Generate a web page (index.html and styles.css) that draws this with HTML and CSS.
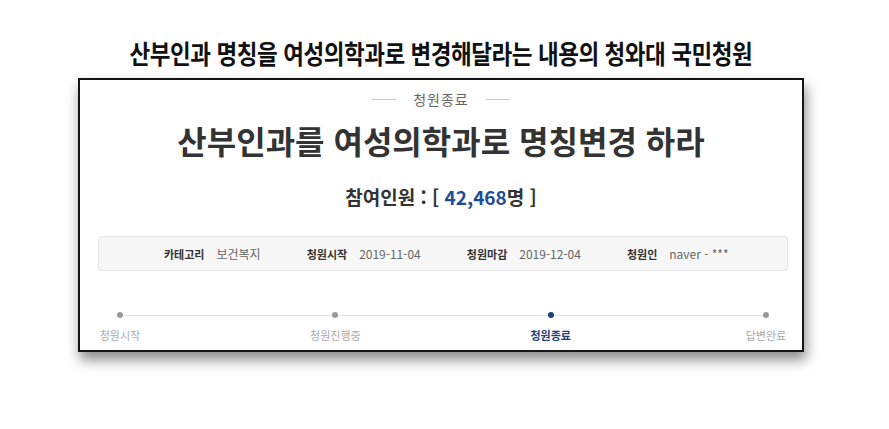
FILE: index.html
```html
<!DOCTYPE html>
<html lang="ko">
<head>
    <meta charset="UTF-8">
    <meta name="viewport" content="width=device-width, initial-scale=1.0">
    <title>청와대 국민청원</title>
    <link rel="stylesheet" href="styles.css">
</head>
<body>
    <div class="page">
        <h1 class="headline"><span>산부인과 명칭을 여성의학과로 변경해달라는 내용의 청와대 국민청원</span></h1>

        <div class="petition">
            <div class="status">
                <span class="status-line"></span>
                <span class="status-text">청원종료</span>
                <span class="status-line"></span>
            </div>
            <h2 class="petition-title">산부인과를 여성의학과로 명칭변경 하라</h2>
            <div class="count">참여인원 : [ <span class="count-num">42,468</span>명 ]</div>

            <div class="info">
                <div class="info-item"><span class="info-label">카테고리</span><span class="info-value">보건복지</span></div>
                <div class="info-item"><span class="info-label">청원시작</span><span class="info-value">2019-11-04</span></div>
                <div class="info-item"><span class="info-label">청원마감</span><span class="info-value">2019-12-04</span></div>
                <div class="info-item"><span class="info-label">청원인</span><span class="info-value">naver - ***</span></div>
            </div>

            <div class="progress">
                <div class="step"><span class="dot"></span><span class="step-label">청원시작</span></div>
                <div class="step"><span class="dot"></span><span class="step-label">청원진행중</span></div>
                <div class="step active"><span class="dot"></span><span class="step-label">청원종료</span></div>
                <div class="step"><span class="dot"></span><span class="step-label">답변완료</span></div>
            </div>
        </div>
    </div>
</body>
</html>
```

FILE: styles.css
```css
body {
    margin: 0;
    background-color: #fff;
    font-family: "Noto Sans CJK KR", "Noto Sans", sans-serif;
    color: #333;
}

.page {
    width: 889px;
    height: 429px;
    padding-top: 36px;
    box-sizing: border-box;
}

.headline {
    margin: 0;
    height: 34px;
    line-height: 34px;
    text-align: center;
    padding-right: 8px;
    font-size: 26px;
    font-weight: 700;
    color: #111;
}

.headline span {
    display: inline-block;
    transform: scaleX(0.865);
    white-space: nowrap;
    letter-spacing: -0.5px;
}

.petition {
    width: 726px;
    margin: 8px 0 0 78px;
    border: 2px solid #151515;
    background-color: #fff;
    box-sizing: border-box;
    padding-bottom: 7px;
    box-shadow: 2px 8px 12px rgba(0, 0, 0, 0.45);
}

.status {
    margin-top: 10px;
    height: 18px;
    display: flex;
    justify-content: center;
    align-items: center;
    gap: 17px;
}

.status-line {
    width: 24px;
    height: 1px;
    background-color: #c8c8c8;
}

.status-text {
    font-size: 14px;
    line-height: 18px;
    letter-spacing: 1px;
    color: #666;
}

.petition-title {
    margin: 14px 0 0;
    line-height: 36px;
    text-align: center;
    font-size: 32px;
    font-weight: 700;
    color: #333;
}

.count {
    margin-top: 27px;
    line-height: 24px;
    text-align: center;
    font-size: 19px;
    font-weight: 700;
    color: #333;
}

.count-num {
    color: #1f4b94;
}

.info {
    margin: 27px 14px 0 18px;
    height: 35px;
    box-sizing: border-box;
    border: 1px solid #e6e6e6;
    border-radius: 3px;
    background-color: #f7f7f7;
    display: flex;
    align-items: center;
    padding-left: 65px;
    gap: 46px;
    font-size: 11px;
}

.info-item {
    display: flex;
    align-items: baseline;
    gap: 12px;
    white-space: nowrap;
}

.info-label {
    font-weight: 700;
    color: #333;
}

.info-value {
    font-size: 12px;
    color: #666;
}

.progress {
    position: relative;
    margin: 41px 13px 0 17px;
    display: flex;
    justify-content: space-between;
}

.progress::before {
    content: "";
    position: absolute;
    left: 23px;
    right: 23px;
    top: 3px;
    height: 1px;
    background-color: #e2e2e2;
}

.step {
    position: relative;
    width: 46px;
    display: flex;
    flex-direction: column;
    align-items: center;
}

.dot {
    width: 6px;
    height: 6px;
    border-radius: 50%;
    background-color: #999;
}

.step-label {
    margin-top: 9px;
    line-height: 16px;
    font-size: 11px;
    color: #aaa;
    white-space: nowrap;
}

.step.active .dot {
    background-color: #1f3f78;
}

.step.active .step-label {
    font-weight: 700;
    color: #1f3f78;
}
```
